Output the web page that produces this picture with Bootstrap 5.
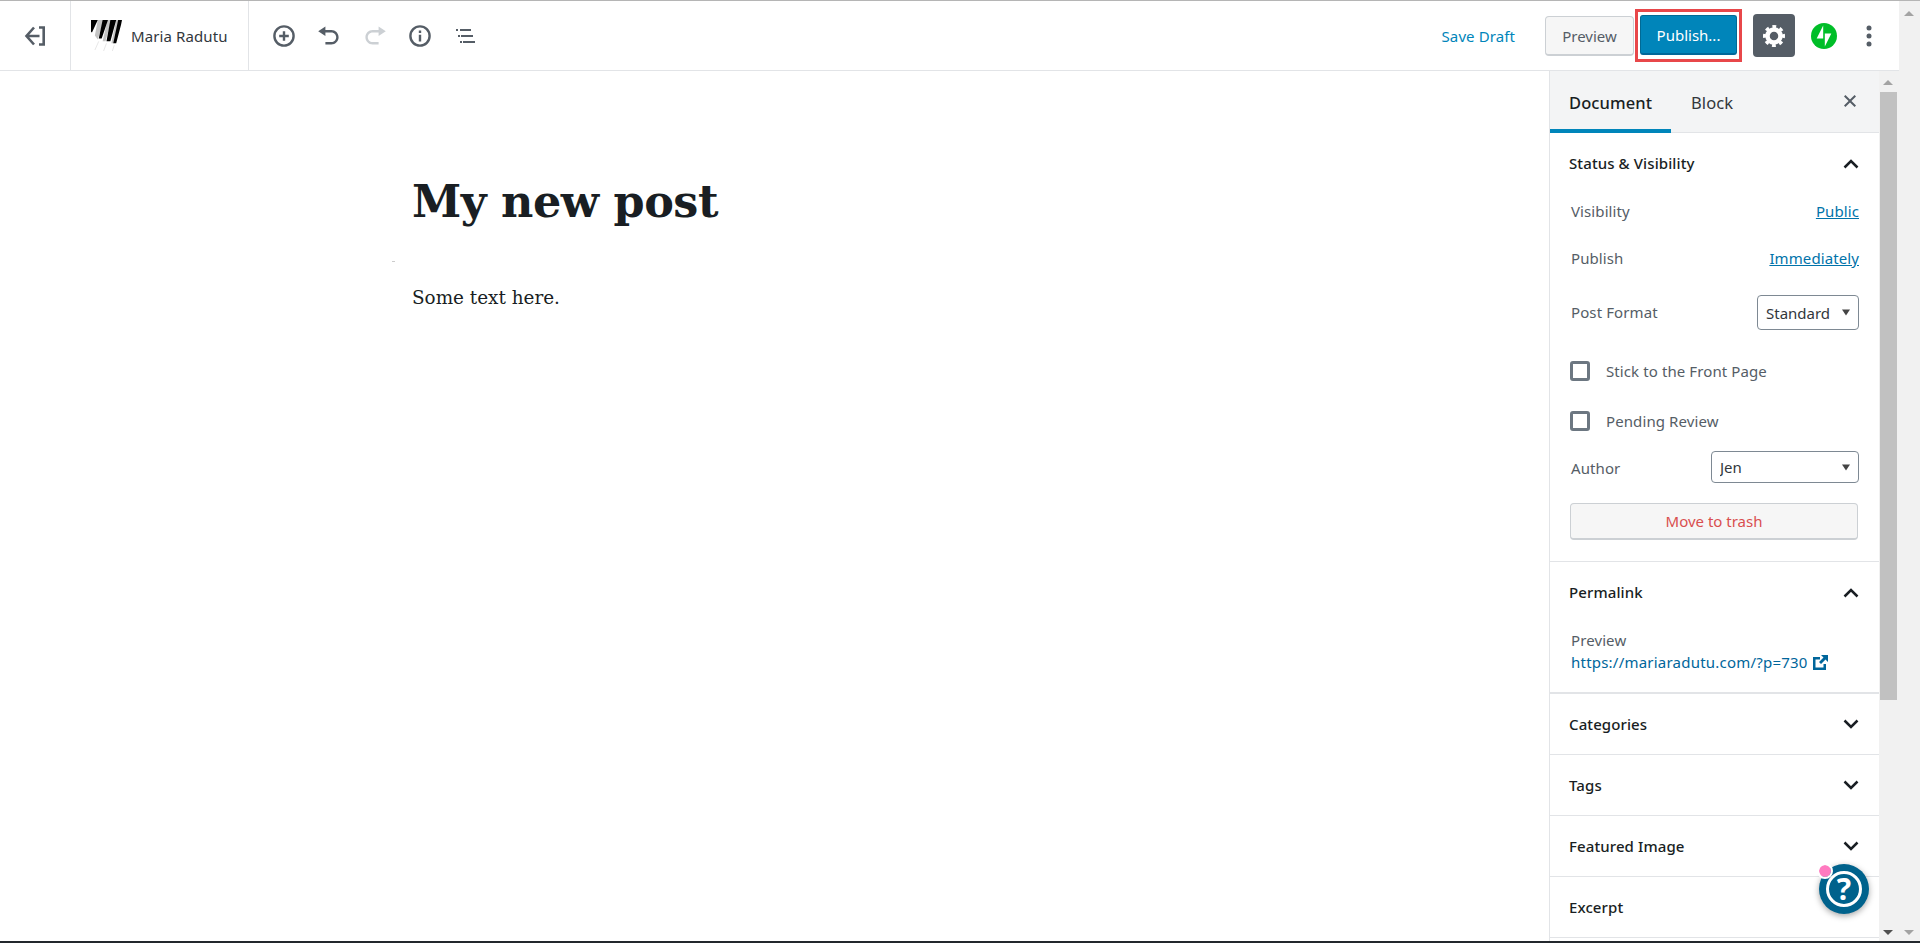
<!DOCTYPE html>
<html lang="en">
<head>
  <meta charset="UTF-8">
  <title>Add New Post</title>
  <link href="https://cdn.jsdelivr.net/npm/bootstrap@5.3.0/dist/css/bootstrap.min.css" rel="stylesheet">
  <style>
    html, body { height: 943px; overflow: hidden; }
    body { font-family: "Noto Sans", "Open Sans", sans-serif; font-size: 15px; letter-spacing: .1px; color: #555d66; background: #fff; border-top: 1px solid #b5b5b5; border-bottom: 2px solid #23282d; }
    .page-wrap { height: 940px; }
    .page-scroll { width: 21px; background: #f1f1f1; }
    .editor-side { min-width: 0; }
    .top-bar { height: 70px; border-bottom: 1px solid #e2e4e7; }
    .back-box { width: 71px; border-right: 1px solid #e2e4e7; }
    .site-box { width: 178px; border-right: 1px solid #e2e4e7; padding-left: 20px; gap: 9px; color: #32373c; }
    .site-name { padding-top: 2px; }
    .tool-icons { padding-left: 12px; }
    .tool-btn { width: 45.5px; height: 40px; }
    .tool-btn svg { fill: #555d66; }
    .tool-btn.is-off svg { fill: #ccd0d4; }
    .save-link { color: #0085ba; margin-right: 30px; padding-top: 2px; text-decoration: none; }
    .preview-btn { width: 89px; height: 40px; background: #f6f6f6; border: 1px solid #ccd0d4; border-bottom-width: 2px; border-radius: 4px; color: #555d66; padding: 3px 0 0; }
    .publish-mark { border: 3px solid #e8474a; padding: 3px 2px 4px; margin-left: 1px; margin-right: 11px; }
    .publish-btn { width: 97px; height: 40px; background: #0085ba; border: 1px solid #006a95; border-bottom: 2px solid #006799; border-radius: 3px; color: #fff; padding: 2px 0 0; }
    .gear-box { width: 42px; height: 43px; background: #555d66; border-radius: 4px; }
    .jet-box { width: 58px; }
    .kebab-box { width: 46px; padding-left: 13px; }
    .editor-area { min-height: 0; }
    .post-area { padding: 102px 0 0 412px; min-width: 0; }
    .post-title { font-family: "DejaVu Serif", "Liberation Serif", serif; font-weight: 700; font-size: 44.5px; line-height: 56px; color: #191e23; margin: 0 0 32px; letter-spacing: -.5px; }
    .post-text { font-family: "DejaVu Serif", "Liberation Serif", serif; font-size: 18.4px; line-height: 28px; color: #191e23; margin: 0; letter-spacing: 0; }
    .tiny-dash { width: 3px; height: 1px; background: #ccc; margin: 0 0 22px -20px; }
    .side-panel { width: 330px; border-left: 1px solid #e2e4e7; overflow: hidden; }
    .side-tabs { height: 62px; background: #f3f4f5; border-bottom: 1px solid #e2e4e7; }
    .side-tab { height: 62px; padding: 0 20px; font-size: 16.5px; color: #32373c; line-height: 64px; }
    .side-tab.is-active { width: 121px; color: #191e23; font-weight: 500; border-bottom: 4px solid #0085ba; padding: 0 0 0 19px; margin-right: 0; flex-shrink: 0; }
    .side-close { margin-left: auto; margin-right: 19px; margin-top: 18px; }
    .sec-box { border-bottom: 1px solid #e2e4e7; padding: 0 20px; }
    .sec-box.perm-sec { border-bottom-width: 2px; padding-bottom: 19px; }
    .sec-head { height: 61px; margin-left: -1px; color: #191e23; font-weight: 500; }
    .sec-box.is-shut .sec-head { height: 60px; }
    .sec-row { padding-left: 1px; }
    .row-vis { height: 34px; }
    .row-pub { height: 34px; margin-top: 13px; }
    .row-format { height: 35px; margin-top: 20px; }
    .row-stick { height: 24px; margin-top: 29px; }
    .row-pending { height: 24px; margin-top: 26px; }
    .row-author { height: 32px; margin-top: 18px; }
    .row-author span { padding-top: 2px; }
    .perm-label { line-height: 22px; margin-top: 6px; }
    .blue-link { color: #0073aa; }
    .pick-box { height: 100%; padding: 0 20px 0 8px; font-size: 15px; color: #32373c; border: 1px solid #7e8993; border-radius: 4px; background-position: right 8px center; background-size: 8px 7px; background-repeat: no-repeat; background-image: url("data:image/svg+xml,%3Csvg xmlns='http://www.w3.org/2000/svg' viewBox='0 0 9 7'%3E%3Cpath fill='%23444' d='M0 0h9L4.500 7z'/%3E%3C/svg%3E"); line-height: normal; }
    .pick-format { width: 102px; }
    .pick-author { width: 148px; }
    .check-box { width: 20px; height: 20px; border: 3px solid #6c7781; border-radius: 3px; background: #fff; margin-left: 0; }
    .trash-btn { width: 288px; height: 37px; margin: 20px 0 21px; background: #f6f6f6; border: 1px solid #ccd0d4; border-bottom-width: 2px; border-radius: 4px; color: #d94f4f; padding: 0; }
    .perm-link { color: #00669b; line-height: 22px; letter-spacing: .22px; }
    .inner-scroll { width: 20px; background: #f1f1f1; }
    .scroll-thumb { width: 17px; height: 608px; background: #c1c1c1; margin: 21px 0 0 1px; }
    .scroll-up { width: 0; height: 0; border: 5px solid transparent; border-top: 0; border-bottom: 5px solid #a3a3a3; position: absolute; }
    .scroll-dn { width: 0; height: 0; border: 5px solid transparent; border-bottom: 0; border-top: 5px solid #505050; position: absolute; }
    .arrow-page-up { left: 1904px; top: 10px; }
    .arrow-side-up { left: 1883px; top: 79px; }
    .arrow-side-dn { left: 1883px; top: 929px; }
    .arrow-page-dn { left: 1904px; top: 929px; border-top-color: #a3a3a3; }
    .help-bubble { position: absolute; left: 1819px; top: 863px; width: 50px; height: 50px; border-radius: 50%; background: #00628c; box-shadow: 0 2px 6px rgba(0,0,0,.35); }
    .help-ring { width: 36px; height: 36px; border: 3px solid #fff; border-radius: 50%; color: #fff; font-size: 30px; font-weight: 700; line-height: 1; }
    .help-dot { position: absolute; left: 0; top: 1px; width: 12px; height: 12px; border-radius: 50%; background: #ff7ac0; outline: 2px solid #fff; }
  </style>
</head>
<body class="position-relative">
  <div class="page-wrap d-flex">
    <div class="editor-side flex-grow-1 d-flex flex-column">
      <!-- top toolbar -->
      <header class="top-bar d-flex align-items-stretch flex-shrink-0">
        <div class="back-box d-flex align-items-center justify-content-center">
          <svg width="22" height="22" viewBox="0 0 22 22" fill="none" stroke="#555d66" stroke-width="2.600"><path d="M10 2.500 2.500 11l7.500 8.500M3 11h12.500M15 2.500h4.700v17H15"/></svg>
        </div>
        <div class="site-box d-flex align-items-center">
          <svg width="31" height="31" viewBox="0 0 32 32">
            <path fill="#c4c4c4" d="M7 0h6L7 20l-3-4zM17 0h4L15 22h-3zM26 0h3L24 24h-3z"/>
            <path fill="#000" d="M0 0h7L1 13l-1-1zM12 0h5.500L11 19H8zM20 0h6L20 22h-4zM28 0h4l-1 5-5 19h-3z"/>
            <path fill="none" stroke="#e6e6e6" d="M8 22l-4 9M16 24l-3 8M24 26l-2 6"/>
          </svg>
          <span class="site-name">Maria Radutu</span>
        </div>
        <div class="tool-icons d-flex align-items-center">
          <div class="tool-btn d-flex align-items-center justify-content-center"><svg width="24" height="24" viewBox="0 0 20 20"><path d="M10 1a9 9 0 1 0 0 18 9 9 0 0 0 0-18zm0 16a7 7 0 1 1 0-14 7 7 0 0 1 0 14zM11 6H9v3H6v2h3v3h2v-3h3V9h-3z"/></svg></div>
          <div class="tool-btn d-flex align-items-center justify-content-center"><svg width="24" height="24" viewBox="0 0 20 20"><path d="M12 5H7V2L1 6l6 4V7h5c2.200 0 4 1.800 4 4s-1.800 4-4 4H7v2h5c3.300 0 6-2.700 6-6s-2.700-6-6-6z"/></svg></div>
          <div class="tool-btn is-off d-flex align-items-center justify-content-center"><svg width="24" height="24" viewBox="0 0 20 20"><path d="M8 5h5V2l6 4-6 4V7H8c-2.200 0-4 1.800-4 4s1.800 4 4 4h5v2H8c-3.300 0-6-2.700-6-6s2.700-6 6-6z"/></svg></div>
          <div class="tool-btn d-flex align-items-center justify-content-center"><svg width="24" height="24" viewBox="0 0 20 20"><path d="M10 1a9 9 0 1 0 0 18 9 9 0 0 0 0-18zm0 16a7 7 0 1 1 0-14 7 7 0 0 1 0 14zM9 9h2v5.500H9zM9 5.500h2v2H9z"/></svg></div>
          <div class="tool-btn d-flex align-items-center justify-content-center"><svg width="20" height="16" viewBox="0 0 20 16"><path d="M0 1h2v2H0zM4 1h11v2H4zM2 7h2v2H2zM5 7h12v2H5zM4 13h2v2H4zM7 13h12v2H7z"/></svg></div>
        </div>
        <div class="ms-auto d-flex align-items-center">
          <a class="save-link" href="#">Save Draft</a>
          <button class="preview-btn" type="button">Preview</button>
          <div class="publish-mark d-flex"><button class="publish-btn" type="button">Publish...</button></div>
          <div class="gear-box d-flex align-items-center justify-content-center">
            <svg width="24" height="24" viewBox="0 0 24 24" fill="none" stroke="#fff"><circle cx="12" cy="12" r="6.500" stroke-width="4.500"/><circle cx="12" cy="12" r="9.500" stroke-width="3" stroke-dasharray="3.730 3.730" transform="rotate(-11.250 12 12)"/></svg>
          </div>
          <div class="jet-box d-flex align-items-center justify-content-center">
            <svg width="26" height="26" viewBox="0 0 32 32"><circle cx="16" cy="16" r="16" fill="#00be28"/><path fill="#fff" d="M15 19H7l8-16zM17 29V13h8z"/></svg>
          </div>
          <div class="kebab-box d-flex align-items-center">
            <svg width="6" height="22" viewBox="0 0 6 22" fill="#555d66"><circle cx="3" cy="3" r="2.500"/><circle cx="3" cy="11" r="2.500"/><circle cx="3" cy="19" r="2.500"/></svg>
          </div>
        </div>
      </header>

      <div class="editor-area flex-grow-1 d-flex">
        <!-- post content -->
        <main class="post-area flex-grow-1">
          <h1 class="post-title">My new post</h1>
          <div class="tiny-dash"></div>
          <p class="post-text">Some text here.</p>
        </main>

        <!-- settings sidebar -->
        <aside class="side-panel flex-shrink-0">
          <div class="side-tabs d-flex align-items-start">
            <div class="side-tab is-active">Document</div>
            <div class="side-tab">Block</div>
            <svg class="side-close" width="20" height="24" viewBox="0 0 20 24" fill="#555d66"><path d="M5.400 6 4 7.400 8.600 12 4 16.600 5.400 18l4.600-4.600 4.600 4.600 1.400-1.400-4.600-4.600L16 7.400 14.600 6 10 10.600z"/></svg>
          </div>

          <section class="sec-box">
            <div class="sec-head d-flex justify-content-between align-items-center">
              <span>Status &amp; Visibility</span>
              <svg width="16" height="10" viewBox="0 0 16 10" fill="none" stroke="#191e23" stroke-width="2.500"><path d="M1.500 8.500 8 2l6.500 6.500"/></svg>
            </div>
            <div class="sec-row row-vis d-flex justify-content-between align-items-center"><span>Visibility</span><a class="blue-link" href="#">Public</a></div>
            <div class="sec-row row-pub d-flex justify-content-between align-items-center"><span>Publish</span><a class="blue-link" href="#">Immediately</a></div>
            <div class="sec-row row-format d-flex justify-content-between align-items-center"><span>Post Format</span><select class="form-select pick-box pick-format"><option>Standard</option></select></div>
            <div class="row-stick d-flex align-items-center gap-3"><span class="check-box"></span><span>Stick to the Front Page</span></div>
            <div class="row-pending d-flex align-items-center gap-3"><span class="check-box"></span><span>Pending Review</span></div>
            <div class="sec-row row-author d-flex justify-content-between align-items-center"><span>Author</span><select class="form-select pick-box pick-author"><option>Jen</option></select></div>
            <button class="trash-btn d-block" type="button">Move to trash</button>
          </section>

          <section class="sec-box perm-sec">
            <div class="sec-head d-flex justify-content-between align-items-center">
              <span>Permalink</span>
              <svg width="16" height="10" viewBox="0 0 16 10" fill="none" stroke="#191e23" stroke-width="2.500"><path d="M1.500 8.500 8 2l6.500 6.500"/></svg>
            </div>
            <div class="sec-row perm-label">Preview</div>
            <div class="sec-row perm-link d-flex align-items-center gap-1">
              <span>https://mariaradutu.com/?p=730</span>
              <svg width="17" height="17" viewBox="0 0 17 17" fill="#00669b"><path d="M1 3h7v2.500H3.500v8h8V10H14v6H1zM9 1h7v7l-2.500-2.500-4.500 4.500L7 8l4.500-4.500z"/></svg>
            </div>
          </section>

          <section class="sec-box is-shut"><div class="sec-head d-flex justify-content-between align-items-center"><span>Categories</span><svg width="16" height="10" viewBox="0 0 16 10" fill="none" stroke="#191e23" stroke-width="2.500"><path d="M1.500 1.500 8 8l6.500-6.500"/></svg></div></section>
          <section class="sec-box is-shut"><div class="sec-head d-flex justify-content-between align-items-center"><span>Tags</span><svg width="16" height="10" viewBox="0 0 16 10" fill="none" stroke="#191e23" stroke-width="2.500"><path d="M1.500 1.500 8 8l6.500-6.500"/></svg></div></section>
          <section class="sec-box is-shut"><div class="sec-head d-flex justify-content-between align-items-center"><span>Featured Image</span><svg width="16" height="10" viewBox="0 0 16 10" fill="none" stroke="#191e23" stroke-width="2.500"><path d="M1.500 1.500 8 8l6.500-6.500"/></svg></div></section>
          <section class="sec-box is-shut"><div class="sec-head d-flex justify-content-between align-items-center"><span>Excerpt</span></div></section>
        </aside>
        <div class="inner-scroll flex-shrink-0"><div class="scroll-thumb"></div></div>
      </div>
    </div>
    <div class="page-scroll flex-shrink-0"></div>
  </div>

  <!-- scrollbar arrows and help bubble sit on top -->
  <span class="scroll-up arrow-page-up"></span>
  <span class="scroll-up arrow-side-up"></span>
  <span class="scroll-dn arrow-side-dn"></span>
  <span class="scroll-dn arrow-page-dn"></span>
  <div class="help-bubble d-flex align-items-center justify-content-center">
    <div class="help-ring d-flex align-items-center justify-content-center">?</div>
    <span class="help-dot"></span>
  </div>
</body>
</html>
